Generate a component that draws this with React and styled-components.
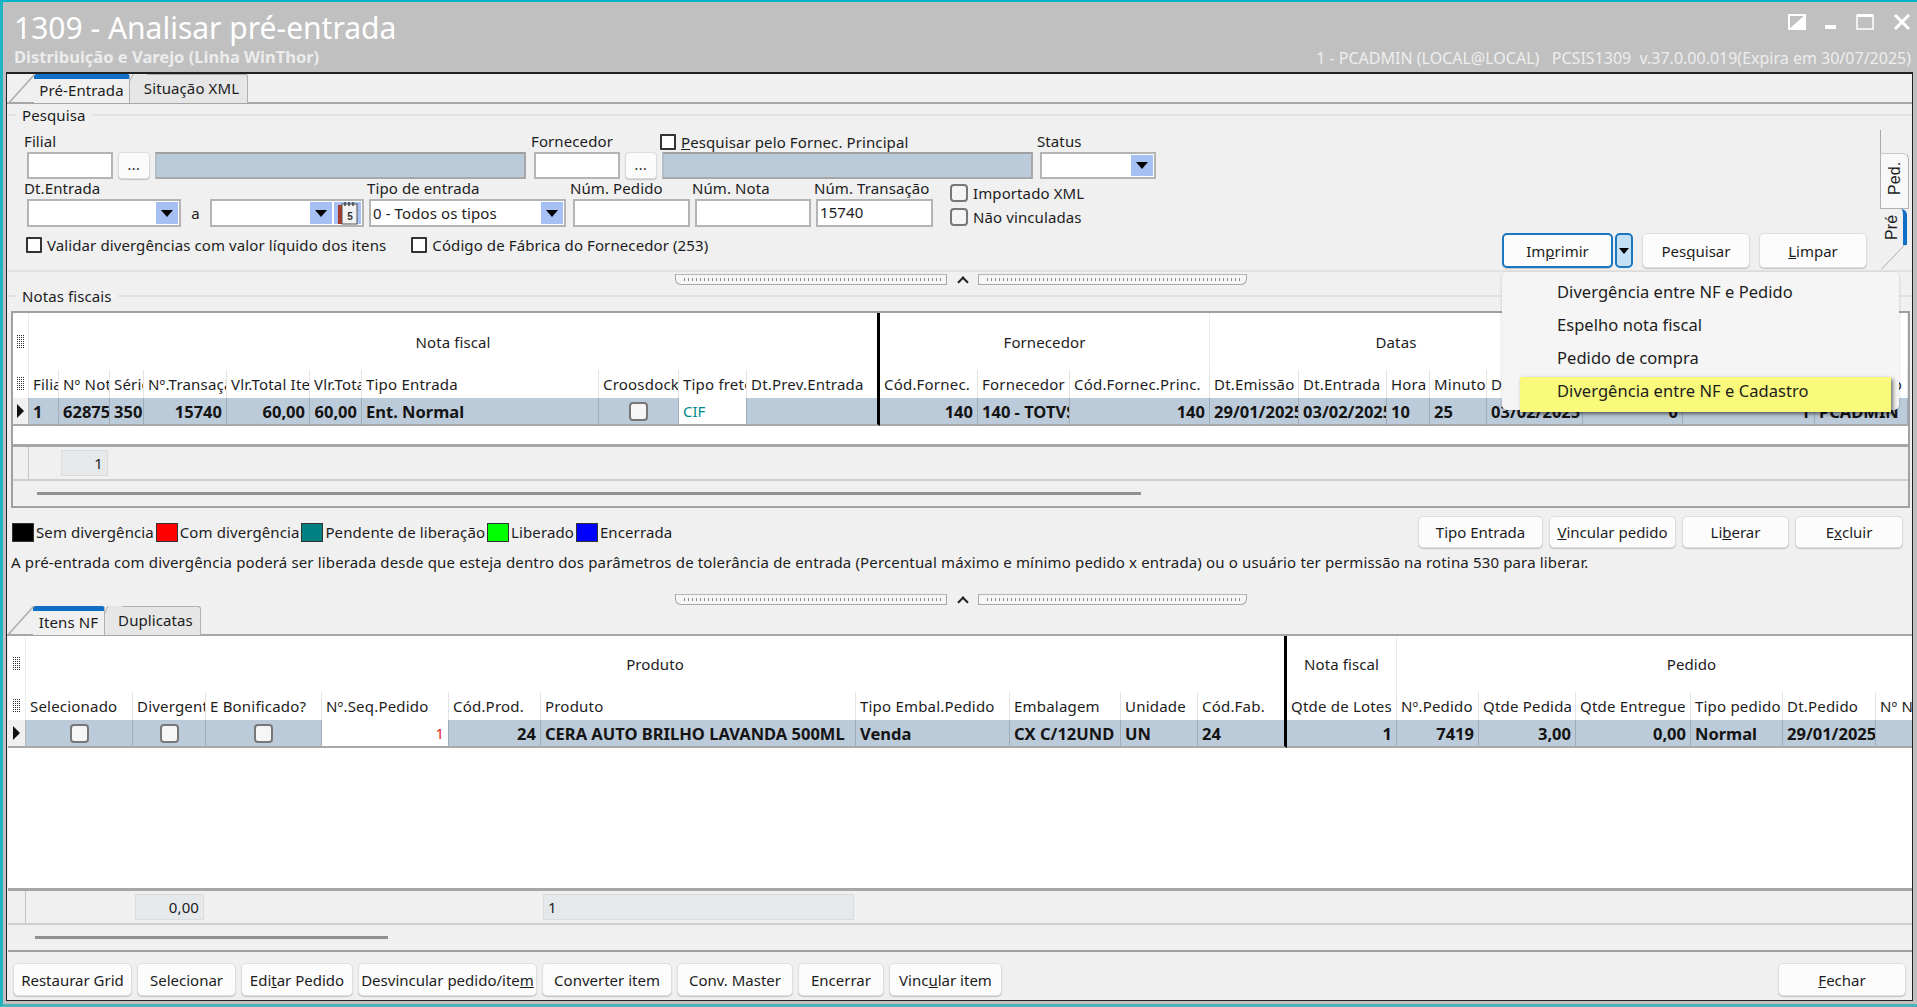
import React from 'react'
import styled, { createGlobalStyle } from 'styled-components'

const GlobalStyle = createGlobalStyle`
  html, body { margin: 0; padding: 0; background: #c0c0c0; }
  body { font-family: "Noto Sans", "Open Sans", sans-serif; font-size: 15px; letter-spacing: 0.1px; color: #1c1c1c; overflow: hidden; }
  * { box-sizing: border-box; }
`

const notasColumns = [
  { label: 'Filial', w: 30, value: '1' },
  { label: 'Nº Nota', w: 51, value: '62875', sum: '1' },
  { label: 'Série', w: 34, value: '350' },
  { label: 'Nº.Transação', w: 83, value: '15740', right: true },
  { label: 'Vlr.Total Itens', w: 83, value: '60,00', right: true },
  { label: 'Vlr.Total', w: 52, value: '60,00', right: true },
  { label: 'Tipo Entrada', w: 237, value: 'Ent. Normal' },
  { label: 'Croosdock', w: 80, check: true },
  { label: 'Tipo frete', w: 68, value: 'CIF', white: true, tone: '#008b8b' },
  { label: 'Dt.Prev.Entrada', w: 133, value: '', heavy: true },
  { label: 'Cód.Fornec.', w: 98, value: '140', right: true },
  { label: 'Fornecedor', w: 92, value: '140 - TOTVS' },
  { label: 'Cód.Fornec.Princ.', w: 140, value: '140', right: true },
  { label: 'Dt.Emissão', w: 89, value: '29/01/2025' },
  { label: 'Dt.Entrada', w: 88, value: '03/02/2025' },
  { label: 'Hora', w: 43, value: '10' },
  { label: 'Minuto', w: 57, value: '25' },
  { label: 'Dt.Lançamento', w: 96, value: '03/02/2025' },
  { label: 'Qtde', w: 100, value: '0', right: true },
  { label: 'Código', w: 132, value: '1', right: true },
  { label: 'Usuário', w: 93, value: 'PCADMIN', rightHead: true },
]

const notasGroups = [
  { label: 'Nota fiscal', span: 10, heavy: true },
  { label: 'Fornecedor', span: 3 },
  { label: 'Datas', span: 5 },
  { label: '', span: 3 },
]

const itensColumns = [
  { label: 'Selecionado', w: 107, check: true },
  { label: 'Divergente', w: 73, check: true, sum: '0,00', sumRight: true },
  { label: 'E Bonificado?', w: 116, check: true },
  { label: 'Nº.Seq.Pedido', w: 127, value: '1', right: true, white: true, tone: '#e8202a' },
  { label: 'Cód.Prod.', w: 92, value: '24', right: true },
  { label: 'Produto', w: 315, value: 'CERA AUTO BRILHO LAVANDA 500ML', sum: '1' },
  { label: 'Tipo Embal.Pedido', w: 154, value: 'Venda' },
  { label: 'Embalagem', w: 111, value: 'CX C/12UND' },
  { label: 'Unidade', w: 77, value: 'UN' },
  { label: 'Cód.Fab.', w: 89, value: '24', heavy: true },
  { label: 'Qtde de Lotes', w: 110, value: '1', right: true },
  { label: 'Nº.Pedido', w: 82, value: '7419', right: true },
  { label: 'Qtde Pedida', w: 97, value: '3,00', right: true },
  { label: 'Qtde Entregue', w: 115, value: '0,00', right: true },
  { label: 'Tipo pedido', w: 92, value: 'Normal' },
  { label: 'Dt.Pedido', w: 93, value: '29/01/2025' },
  { label: 'Nº Nota', w: 111, value: '' },
]

const itensGroups = [
  { label: 'Produto', span: 10, heavy: true },
  { label: 'Nota fiscal', span: 1 },
  { label: 'Pedido', span: 6 },
]

const legendItems = [
  { label: 'Sem divergência', color: '#000000' },
  { label: 'Com divergência', color: '#ff0000' },
  { label: 'Pendente de liberação', color: '#008080' },
  { label: 'Liberado', color: '#00ff00' },
  { label: 'Encerrada', color: '#0000ff' },
]

const HandleIcon = () => (
  <svg width="8" height="14" viewBox="0 0 8 14">
    {[0, 2, 4, 6, 8, 10, 12].map((y) => (
      <path key={y} d={`M0 ${y + 0.5}H8`} stroke="#333" strokeDasharray="1 1" />
    ))}
  </svg>
)

const WindowControls = () => (
  <Controls>
    <svg width="18" height="16" viewBox="0 0 18 16">
      <rect x="1" y="1" width="16" height="14" fill="none" stroke="#fff" strokeWidth="2" />
      <path d="M1 15L17 1V15Z" fill="#fff" />
    </svg>
    <svg width="12" height="16" viewBox="0 0 12 16"><rect x="0" y="11" width="11" height="4" fill="#fff" /></svg>
    <svg width="18" height="16" viewBox="0 0 18 16">
      <rect x="1" y="1.5" width="16" height="13.5" fill="none" stroke="#fff" strokeWidth="1.5" />
      <rect x="1" y="0" width="16" height="3" fill="#fff" />
    </svg>
    <svg width="18" height="16" viewBox="0 0 18 16"><path d="M2 1L16 15M16 1L2 15" stroke="#fff" strokeWidth="3" /></svg>
  </Controls>
)

const CalendarIcon = () => (
  <svg width="24" height="24" viewBox="0 0 24 24">
    <rect x="2" y="4" width="5" height="19" fill="#a83a2c" />
    <rect x="6" y="3" width="15" height="20" fill="#f2f2f2" stroke="#555" />
    <path d="M9 1V5M13 1V5M17 1V5" stroke="#444" strokeWidth="1.5" />
    <text x="14" y="19" fontSize="10" fontWeight="700" textAnchor="middle" fill="#333" fontFamily="Liberation Sans">5</text>
  </svg>
)

const DataGrid = ({ columns, groups, indicator, rowHeight, bandHeight }) => {
  let start = 0
  const bands = groups.map((group) => {
    const slice = columns.slice(start, start + group.span)
    start += group.span
    return { ...group, w: slice.reduce((sum, col) => sum + col.w, 0) }
  })

  return (
    <GridBody>
      <GridRow $h={bandHeight}>
        <HandleCell $w={indicator}><HandleIcon /></HandleCell>
        {bands.map((band, i) => (
          <BandCell key={i} $w={band.w} $heavy={band.heavy}>{band.label}</BandCell>
        ))}
      </GridRow>
      <GridRow $h={rowHeight}>
        <HandleCell $w={indicator}><HandleIcon /></HandleCell>
        {columns.map((col) => (
          <HeadCell key={col.label} $w={col.w} $heavy={col.heavy} $right={col.rightHead}>{col.label}</HeadCell>
        ))}
      </GridRow>
      <GridRow $h={rowHeight}>
        <IndicatorCell $w={indicator}><Arrow /></IndicatorCell>
        {columns.map((col) => (
          <DataCell key={col.label} $w={col.w} $heavy={col.heavy} $right={col.right} $white={col.white} $tone={col.tone}>
            {col.check ? <GridCheck /> : col.value}
          </DataCell>
        ))}
      </GridRow>
      <GridEmpty />
      <FooterRow>
        <FooterHandle $w={indicator} />
        {columns.map((col) => (
          <FooterCell key={col.label} $w={col.w}>
            {col.sum && <SumBox $right={col.sumRight ?? col.label !== 'Produto'}>{col.sum}</SumBox>}
          </FooterCell>
        ))}
      </FooterRow>
    </GridBody>
  )
}

const App = () => (
  <Window>
    <GlobalStyle />
    <TitleBar>
      <TitleBlock>
        <Title>1309 - Analisar pré-entrada</Title>
        <Subtitle>Distribuição e Varejo (Linha WinThor)</Subtitle>
      </TitleBlock>
      <TitleInfo>
        <WindowControls />
        <SessionInfo>1 - PCADMIN (LOCAL@LOCAL)   PCSIS1309  v.37.0.00.019(Expira em 30/07/2025)</SessionInfo>
      </TitleInfo>
    </TitleBar>

    <Panel>
      <TabStrip $h={30} $left={27}>
        <Tab $active $w={96}>Pré-Entrada</Tab>
        <Tab $w={115}>Situação XML</Tab>
      </TabStrip>

      <SearchSection>
        <Legend>Pesquisa</Legend>
        <SearchColumns>
          <SearchBody>
            <FilterRow $top={11}>
              <Field $w={507} $indent={3} $end={5}>
                <FieldLabel>Filial</FieldLabel>
                <FieldControls>
                  <TextBox $w={86} />
                  <DotsButton>...</DotsButton>
                  <ReadOnlyBox />
                </FieldControls>
              </Field>
              <Field $w={506} $indent={3} $end={4}>
                <FieldLabel>
                  <LabelText $w={129}>Fornecedor</LabelText>
                  <InlineCheck $lift={3}><SquareCheck /><span><u>P</u>esquisar pelo Fornec. Principal</span></InlineCheck>
                </FieldLabel>
                <FieldControls>
                  <TextBox $w={86} />
                  <DotsButton>...</DotsButton>
                  <ReadOnlyBox />
                </FieldControls>
              </Field>
              <Field $w={124} $indent={3}>
                <FieldLabel>Status</FieldLabel>
                <Select $w={116} $h={27}><DropArrow /></Select>
              </Field>
            </FilterRow>
            <FilterRow $top={2}>
              <Field $w={343} $indent={3}>
                <FieldLabel>Dt.Entrada</FieldLabel>
                <FieldControls $flush>
                  <Select $w={154}><DropArrow /></Select>
                  <RangeWord>a</RangeWord>
                  <Select $w={154}>
                    <DropArrow />
                    <CalendarBox><CalendarIcon /></CalendarBox>
                  </Select>
                </FieldControls>
              </Field>
              <Field $w={203} $indent={2}>
                <FieldLabel>Tipo de entrada</FieldLabel>
                <Select $w={197}><SelectText>0 - Todos os tipos</SelectText><DropArrow /></Select>
              </Field>
              <Field $w={122} $indent={3}>
                <FieldLabel>Núm. Pedido</FieldLabel>
                <TextBox $w={117} $h={28} />
              </Field>
              <Field $w={122} $indent={3}>
                <FieldLabel>Núm. Nota</FieldLabel>
                <TextBox $w={116} $h={28} />
              </Field>
              <Field $w={136} $indent={2}>
                <FieldLabel>Núm. Transação</FieldLabel>
                <TextBox $w={117} $h={28}>15740</TextBox>
              </Field>
              <CheckStack>
                <InlineCheck><RoundCheck /><span>Importado XML</span></InlineCheck>
                <InlineCheck><RoundCheck /><span>Não vinculadas</span></InlineCheck>
              </CheckStack>
            </FilterRow>
            <ActionRow>
              <ActionChecks>
                <InlineCheck><SquareCheck /><span>Validar divergências com valor líquido dos itens</span></InlineCheck>
                <InlineCheck><SquareCheck /><span>Código de Fábrica do Fornecedor (253)</span></InlineCheck>
              </ActionChecks>
              <ActionButtons>
                <PrintGroup>
                  <Button $w={111} $h={35} $focus>Im<u>p</u>rimir</Button>
                  <SplitArrow />
                  <Menu>
                    <MenuItem>Divergência entre NF e Pedido</MenuItem>
                    <MenuItem>Espelho nota fiscal</MenuItem>
                    <MenuItem>Pedido de compra</MenuItem>
                    <MenuHighlight>Divergência entre NF e Cadastro</MenuHighlight>
                  </Menu>
                </PrintGroup>
                <Button $w={108} $h={35}>Pes<u>q</u>uisar</Button>
                <Button $w={108} $h={35}><u>L</u>impar</Button>
              </ActionButtons>
            </ActionRow>
          </SearchBody>
          <SideTabs>
            <SideLine />
            <SideTab>Ped.</SideTab>
            <SideTab $active>Pré</SideTab>
            <svg width="28" height="26" viewBox="0 0 28 26"><path d="M25 0L1 25" stroke="#aaa" /></svg>
          </SideTabs>
        </SearchColumns>
      </SearchSection>

      <Splitter $h={16} $line>
        <Grip $w={272} />
        <SplitCaret />
        <Grip $w={269} $flip />
      </Splitter>

      <Legend $top={1} $bottom={7}>Notas fiscais</Legend>

      <GridFrame $h={197} $side={4} $endSide={2}>
        <DataGrid columns={notasColumns} groups={notasGroups} indicator={16} rowHeight={28} bandHeight={57} />
        <ScrollArea $h={25}><ScrollBar $left={24} $w={1104} /></ScrollArea>
      </GridFrame>

      <LegendBar>
        <LegendRow>
          <LegendList>
            {legendItems.map((item) => (
              <LegendItem key={item.label}>
                <Swatch $color={item.color} />
                {item.label}
              </LegendItem>
            ))}
          </LegendList>
          <LegendButtons>
            <Button $w={125} $h={32}>Tipo Entrada</Button>
            <Button $w={127} $h={32}><u>V</u>incular pedido</Button>
            <Button $w={107} $h={32}>Li<u>b</u>erar</Button>
            <Button $w={108} $h={32}>E<u>x</u>cluir</Button>
          </LegendButtons>
        </LegendRow>
        <InfoText>A pré-entrada com divergência poderá ser liberada desde que esteja dentro dos parâmetros de tolerância de entrada (Percentual máximo e mínimo pedido x entrada) ou o usuário ter permissão na rotina 530 para liberar.</InfoText>
      </LegendBar>

      <Splitter $h={14}>
        <Grip $w={272} />
        <SplitCaret />
        <Grip $w={269} $flip />
      </Splitter>

      <TabStrip $h={30} $left={26}>
        <Tab $active $w={72}>Itens NF</Tab>
        <Tab $w={93}>Duplicatas</Tab>
      </TabStrip>

      <GridFrame $grow $side={1} $endSide={0} $light>
        <DataGrid columns={itensColumns} groups={itensGroups} indicator={18} rowHeight={28} bandHeight={56} />
        <ScrollArea $h={25}><ScrollBar $left={27} $w={353} /></ScrollArea>
      </GridFrame>

      <Toolbar>
        <Button $w={119} $h={33}>Restaurar Grid</Button>
        <Button $w={99} $h={33}>Selecionar</Button>
        <Button $w={112} $h={33}>Edi<u>t</u>ar Pedido</Button>
        <Button $w={179} $h={33}>Desvincular pedido/ite<u>m</u></Button>
        <Button $w={130} $h={33}>Converter item</Button>
        <Button $w={116} $h={33}>Conv. Master</Button>
        <Button $w={86} $h={33}>Encerrar</Button>
        <Button $w={113} $h={33}>Vinc<u>u</u>lar item</Button>
        <CloseButton $w={128} $h={33}><u>F</u>echar</CloseButton>
      </Toolbar>
    </Panel>
  </Window>
)

const Window = styled.div`
  width: 1917px;
  height: 1007px;
  display: flex;
  flex-direction: column;
  background: #c0c0c0;
  border-top: 2px solid #00b4c8;
  border-left: 3px solid #1fb3c4;
  border-bottom: 3px solid #4ab5b8;
`

const TitleBar = styled.div`
  height: 70px;
  flex: none;
  display: flex;
  justify-content: space-between;
  padding: 0 6px 0 11px;
`

const TitleBlock = styled.div`
  display: flex;
  flex-direction: column;
`

const Title = styled.div`
  font-size: 30px;
  line-height: 38px;
  margin-top: 7px;
  letter-spacing: 0;
  color: #fff;
`

const Subtitle = styled.div`
  font-size: 16.5px;
  font-weight: 700;
  line-height: 20px;
  margin-top: 0;
  letter-spacing: 0;
  color: #ececec;
`

const TitleInfo = styled.div`
  display: flex;
  flex-direction: column;
  align-items: flex-end;
`

const Controls = styled.div`
  display: flex;
  align-items: flex-start;
  gap: 19px;
  margin-top: 12px;
  height: 32px;
`

const SessionInfo = styled.div`
  font-size: 16px;
  line-height: 20px;
  margin-top: 2px;
  letter-spacing: 0;
  color: #eeeeee;
  white-space: pre;
`

const Panel = styled.div`
  flex: 1;
  min-height: 0;
  margin: 0 4px 3px 3px;
  display: flex;
  flex-direction: column;
  background: #f0f0f0;
  border: 1px solid #222;
  border-top-width: 2px;
`

const TabStrip = styled.div`
  height: ${(p) => p.$h}px;
  flex: none;
  display: flex;
  align-items: flex-end;
  gap: 3px;
  padding-left: ${(p) => p.$left}px;
  border-bottom: 2px solid #a6a6a6;
`

const Tab = styled.div`
  position: relative;
  width: ${(p) => p.$w}px;
  height: 29px;
  margin-bottom: -1px;
  display: flex;
  align-items: center;
  justify-content: center;
  white-space: nowrap;
  padding: 0 0 2px ${(p) => (p.$active ? 0 : 3)}px;
  border-right: 1px solid #b0b0b0;
  border-top: ${(p) => (p.$active ? '5px solid #0f6fc6' : '1px solid #b0b0b0')};
  border-top-right-radius: 3px;
  background: ${(p) => (p.$active ? '#f0f0f0' : '#e6e6e6')};
  z-index: ${(p) => (p.$active ? 2 : 1)};

  &::before {
    content: '';
    position: absolute;
    top: ${(p) => (p.$active ? '-5px' : '-1px')};
    bottom: 0;
    left: ${(p) => (p.$active ? '-13px' : '-7px')};
    width: ${(p) => (p.$active ? '1px' : '14px')};
    background: ${(p) => (p.$active ? '#b0b0b0' : '#e6e6e6')};
    border-left: 1px solid #b0b0b0;
    transform: skewX(-${(p) => (p.$active ? 42 : 24)}deg);
    z-index: -1;
  }
`

const SearchSection = styled.div`
  height: 166px;
  flex: none;
  display: flex;
  flex-direction: column;
`

const SearchColumns = styled.div`
  flex: 1;
  min-height: 0;
  display: flex;
`

const SearchBody = styled.div`
  flex: 1;
  min-width: 0;
  display: flex;
  flex-direction: column;
`

const Legend = styled.div`
  flex: none;
  display: flex;
  align-items: center;
  gap: 6px;
  height: 17px;
  margin-top: ${(p) => p.$top ?? 2}px;
  margin-bottom: ${(p) => p.$bottom || 0}px;

  &::before {
    content: '';
    width: 9px;
    height: 2px;
    background: #e2e2e2;
  }

  &::after {
    content: '';
    flex: 1;
    height: 2px;
    background: #e2e2e2;
  }
`

const FilterRow = styled.div`
  display: flex;
  margin-top: ${(p) => p.$top}px;
  padding-left: 17px;
`

const Field = styled.div`
  width: ${(p) => p.$w}px;
  flex: none;
  display: flex;
  flex-direction: column;
  padding-right: ${(p) => p.$end || 0}px;

  & > *:not(:first-child) {
    margin-left: ${(p) => p.$indent}px;
  }
`

const FieldLabel = styled.div`
  height: 18px;
  line-height: 15px;
  display: flex;
  white-space: nowrap;
`

const LabelText = styled.span`
  width: ${(p) => p.$w}px;
`

const FieldControls = styled.div`
  display: flex;
  gap: ${(p) => (p.$flush ? 0 : 5)}px;
`

const TextBox = styled.div`
  width: ${(p) => p.$w}px;
  height: ${(p) => p.$h || 27}px;
  flex: none;
  padding: 0 2px 3px;
  line-height: 22px;
  background: #fff;
  border: 2px solid #b4b4b4;
`

const ReadOnlyBox = styled.div`
  flex: 1;
  height: 27px;
  background: #bccbd9;
  border: 2px solid #a8a8a8;
  border-left-color: #b4bec8;
  border-top-color: #a0a0a0;
`

const DotsButton = styled.div`
  width: 32px;
  height: 27px;
  flex: none;
  text-align: center;
  line-height: 24px;
  font-size: 14px;
  letter-spacing: 0.5px;
  background: #fbfbfb;
  border: 1px solid #dcdcdc;
  border-radius: 4px;
  box-shadow: 0 1px 1px #c4c4c4;
`

const Select = styled.div`
  width: ${(p) => p.$w}px;
  height: ${(p) => p.$h || 28}px;
  flex: none;
  display: flex;
  justify-content: flex-end;
  align-items: stretch;
  padding: 1px;
  background: #fff;
  border: 2px solid #b4b4b4;
`

const SelectText = styled.span`
  flex: 1;
  padding-left: 1px;
  line-height: 22px;
  white-space: nowrap;
`

const DropArrow = styled.span`
  width: 22px;
  flex: none;
  display: flex;
  align-items: center;
  justify-content: center;
  background: #a6c0f4;

  &::after {
    content: '';
    border-left: 6px solid transparent;
    border-right: 6px solid transparent;
    border-top: 7px solid #000;
  }
`

const CalendarBox = styled.span`
  width: 27px;
  flex: none;
  margin-left: 2px;
  display: flex;
  align-items: center;
  justify-content: center;
  background: #a6c0f4;
`

const RangeWord = styled.span`
  width: 29px;
  flex: none;
  text-align: center;
  line-height: 28px;
`

const InlineCheck = styled.div`
  display: flex;
  align-items: center;
  gap: 5px;
  margin-top: -${(p) => p.$lift || 0}px;
  line-height: 18px;
  white-space: nowrap;
`

const SquareCheck = styled.span`
  width: 16px;
  height: 16px;
  flex: none;
  background: #fdfdfd;
  border: 2px solid #333;
  border-radius: 1px;
`

const RoundCheck = styled.span`
  width: 18px;
  height: 18px;
  flex: none;
  background: #f4f4f4;
  border: 2px solid #777;
  border-radius: 4px;
`

const CheckStack = styled.div`
  display: flex;
  flex-direction: column;
  gap: 6px;
  margin-top: 3px;
`

const ActionRow = styled.div`
  display: flex;
  justify-content: space-between;
  align-items: flex-start;
  margin-top: 6px;
  padding: 0 13px 0 19px;
`

const ActionChecks = styled.div`
  display: flex;
  gap: 25px;
  padding-top: 3px;
`

const ActionButtons = styled.div`
  display: flex;
  gap: 9px;
`

const PrintGroup = styled.div`
  position: relative;
  display: flex;
  gap: 2px;
`

const Button = styled.div`
  width: ${(p) => p.$w}px;
  height: ${(p) => p.$h}px;
  flex: none;
  display: flex;
  align-items: center;
  justify-content: center;
  letter-spacing: 0;
  white-space: nowrap;
  background: #fcfcfc;
  border: ${(p) => (p.$focus ? '2px solid #1a78c2' : '1px solid #dedede')};
  border-radius: 5px;
  box-shadow: 0 1px 1px #c2c2c2;
`

const CloseButton = styled(Button)`
  margin-left: auto;
`

const SplitArrow = styled.div`
  width: 18px;
  height: 35px;
  display: flex;
  align-items: center;
  justify-content: center;
  background: #c4e0f6;
  border: 2px solid #1a78c2;
  border-radius: 5px;

  &::after {
    content: '';
    border-left: 5px solid transparent;
    border-right: 5px solid transparent;
    border-top: 6px solid #000;
  }
`

const Menu = styled.div`
  position: absolute;
  top: calc(100% + 4px);
  left: 0;
  z-index: 20;
  width: 397px;
  height: 138px;
  padding-top: 3px;
  background: #f5f5f5;
  border-radius: 5px;
  box-shadow: 0 1px 3px rgba(0, 0, 0, 0.2);
  font-size: 16.5px;
  letter-spacing: 0.05px;
`

const MenuItem = styled.div`
  height: 33px;
  line-height: 33px;
  padding-left: 55px;
  white-space: nowrap;
`

const MenuHighlight = styled.div`
  width: 371px;
  height: 35px;
  margin: 3px 0 0 18px;
  padding-left: 37px;
  line-height: 27px;
  white-space: nowrap;
  background: #f9f97c;
  box-shadow: 2px 2px 4px rgba(0, 0, 0, 0.55);
`

const SideTabs = styled.div`
  width: 32px;
  flex: none;
  display: flex;
  flex-direction: column;
  padding-top: 7px;
`

const SideLine = styled.div`
  width: 1px;
  height: 23px;
  flex: none;
  background: #a8a8a8;
`

const SideTab = styled.div`
  writing-mode: vertical-rl;
  transform: rotate(180deg);
  flex: none;
  width: ${(p) => (p.$active ? 27 : 29)}px;
  height: ${(p) => (p.$active ? 36 : 56)}px;
  display: flex;
  align-items: center;
  justify-content: center;
  padding: ${(p) => (p.$active ? 0 : 6)}px 0 0;
  font-family: "Liberation Sans", sans-serif;
  font-size: 16px;
  background: ${(p) => (p.$active ? '#f0f0f0' : '#f8f8f8')};
  border-left: ${(p) => (p.$active ? '4px solid #0f6fc6' : '1px solid #b0b0b0')};
  border-top: ${(p) => (p.$active ? 'none' : '1px solid #b0b0b0')};
  border-right: ${(p) => (p.$active ? 'none' : '1px solid #b0b0b0')};
  border-bottom: ${(p) => (p.$active ? 'none' : '1px solid #c8c8c8')};
  border-bottom-left-radius: 6px;
`

const Splitter = styled.div`
  height: ${(p) => p.$h}px;
  flex: none;
  display: flex;
  justify-content: center;
  align-items: flex-start;
  padding-top: 2px;
  padding-left: 3px;
  border-top: ${(p) => (p.$line ? '2px solid #e2e2e2' : 'none')};
`

const Grip = styled.div`
  width: ${(p) => p.$w}px;
  height: 11px;
  background:
    repeating-linear-gradient(90deg, #8c8c8c 0 1px, transparent 1px 4px) center / 100% 3px no-repeat,
    #f6f6f6;
  background-clip: content-box, padding-box;
  padding: 0 5px;
  border: 1px solid #a8a8a8;
  border-top-color: #b8b8b8;
  ${(p) => (p.$flip ? 'border-radius: 0 0 6px 0;' : 'border-radius: 0 0 0 6px;')}
`

const SplitCaret = styled.div`
  width: 31px;
  height: 11px;
  display: flex;
  justify-content: center;
  align-items: center;

  &::after {
    content: '';
    width: 6px;
    height: 6px;
    margin-top: 4px;
    border-left: 2px solid #222;
    border-top: 2px solid #222;
    transform: rotate(45deg);
  }
`

const GridFrame = styled.div`
  flex: ${(p) => (p.$grow ? '1' : 'none')};
  min-height: 0;
  height: ${(p) => (p.$h ? `${p.$h}px` : 'auto')};
  margin: 0 ${(p) => p.$endSide}px 0 ${(p) => p.$side}px;
  display: flex;
  flex-direction: column;
  overflow: hidden;
  background: #f0f0f0;
  border-style: solid;
  border-color: #a0a0a0;
  border-width: ${(p) => (p.$light ? '0 0 2px 0' : '2px')};
`

const GridBody = styled.div`
  flex: 1;
  min-height: 0;
  display: flex;
  flex-direction: column;
  background: #fff;
  padding-top: 0;
`

const GridRow = styled.div`
  height: ${(p) => p.$h}px;
  flex: none;
  display: flex;
`

const GridCell = styled.div`
  width: ${(p) => p.$w}px;
  flex: none;
  overflow: hidden;
  white-space: nowrap;
  display: flex;
  align-items: center;
`

const HandleCell = styled(GridCell)`
  justify-content: center;
  background: #fff;
  border-right: 1px solid #ececec;
`

const IndicatorCell = styled(GridCell)`
  justify-content: center;
  background: #f0f0f0;
  border-bottom: 2px solid #a8a8a8;
  border-right: 1px solid #b8b8b8;
`

const Arrow = styled.span`
  border-top: 7px solid transparent;
  border-bottom: 7px solid transparent;
  border-left: 7px solid #111;
`

const BandCell = styled(GridCell)`
  justify-content: center;
  border-right: ${(p) => (p.$heavy ? '3px solid #000' : '1px solid #ececec')};
`

const HeadCell = styled(GridCell)`
  justify-content: ${(p) => (p.$right ? 'flex-end' : 'flex-start')};
  padding: 0 ${(p) => (p.$right ? 5 : 0)}px 0 ${(p) => (p.$right ? 0 : 4)}px;
  letter-spacing: 0.2px;
  border-right: ${(p) => (p.$heavy ? '3px solid #000' : '1px solid #e4e4e4')};
`

const DataCell = styled(GridCell)`
  justify-content: ${(p) => (p.$right ? 'flex-end' : 'flex-start')};
  padding: 0 4px;
  letter-spacing: 0;
  font-size: ${(p) => (p.$tone ? 15 : 16.5)}px;
  font-weight: ${(p) => (p.$tone ? 400 : 700)};
  color: ${(p) => p.$tone || '#141414'};
  background: ${(p) => (p.$white ? '#fff' : '#bccbd9')};
  border-bottom: 2px solid #a8a8a8;
  border-right: ${(p) => (p.$heavy ? '3px solid #000' : '1px solid #9fadb9')};
`

const GridCheck = styled.span`
  width: 19px;
  height: 19px;
  margin: 0 auto;
  background: #f6f6f6;
  border: 2px solid #777;
  border-radius: 4px;
`

const GridEmpty = styled.div`
  flex: 1;
  min-height: 0;
  background: #fff;
  border-bottom: 3px solid #a6a6a6;
`

const FooterRow = styled.div`
  height: 34px;
  flex: none;
  display: flex;
  background: #f0f0f0;
  border-bottom: 2px solid #cfcfcf;
`

const FooterHandle = styled.div`
  width: ${(p) => p.$w}px;
  flex: none;
  border-right: 1px solid #c4c4c4;
`

const FooterCell = styled.div`
  width: ${(p) => p.$w}px;
  flex: none;
  display: flex;
  padding: 3px 2px;
`

const SumBox = styled.div`
  flex: 1;
  display: flex;
  align-items: center;
  justify-content: ${(p) => (p.$right ? 'flex-end' : 'flex-start')};
  padding: 0 4px;
  background: #e6e9eb;
  border: 1px solid #dcdcdc;
`

const ScrollArea = styled.div`
  height: ${(p) => p.$h}px;
  flex: none;
  display: flex;
  align-items: center;
  background: #f0f0f0;
`

const ScrollBar = styled.div`
  width: ${(p) => p.$w}px;
  height: 3px;
  margin-left: ${(p) => p.$left}px;
  background: #909090;
`

const LegendBar = styled.div`
  height: 84px;
  flex: none;
  display: flex;
  flex-direction: column;
  padding: 8px 9px 0 4px;
`

const LegendRow = styled.div`
  display: flex;
  justify-content: space-between;
  align-items: center;
  height: 32px;
`

const LegendList = styled.div`
  display: flex;
  gap: 2px;
  padding-left: 1px;
`

const LegendItem = styled.div`
  display: flex;
  align-items: center;
  gap: 2px;
  white-space: nowrap;
`

const Swatch = styled.span`
  width: 22px;
  height: 19px;
  background: ${(p) => p.$color};
  border: 1px solid #333;
`

const LegendButtons = styled.div`
  display: flex;
  gap: 6px;
`

const InfoText = styled.div`
  margin-top: 5px;
  line-height: 18px;
  letter-spacing: 0.15px;
  white-space: nowrap;
`

const Toolbar = styled.div`
  flex: none;
  height: 48px;
  display: flex;
  gap: 5px;
  padding: 11px 6px 0 6px;
`

export default App
